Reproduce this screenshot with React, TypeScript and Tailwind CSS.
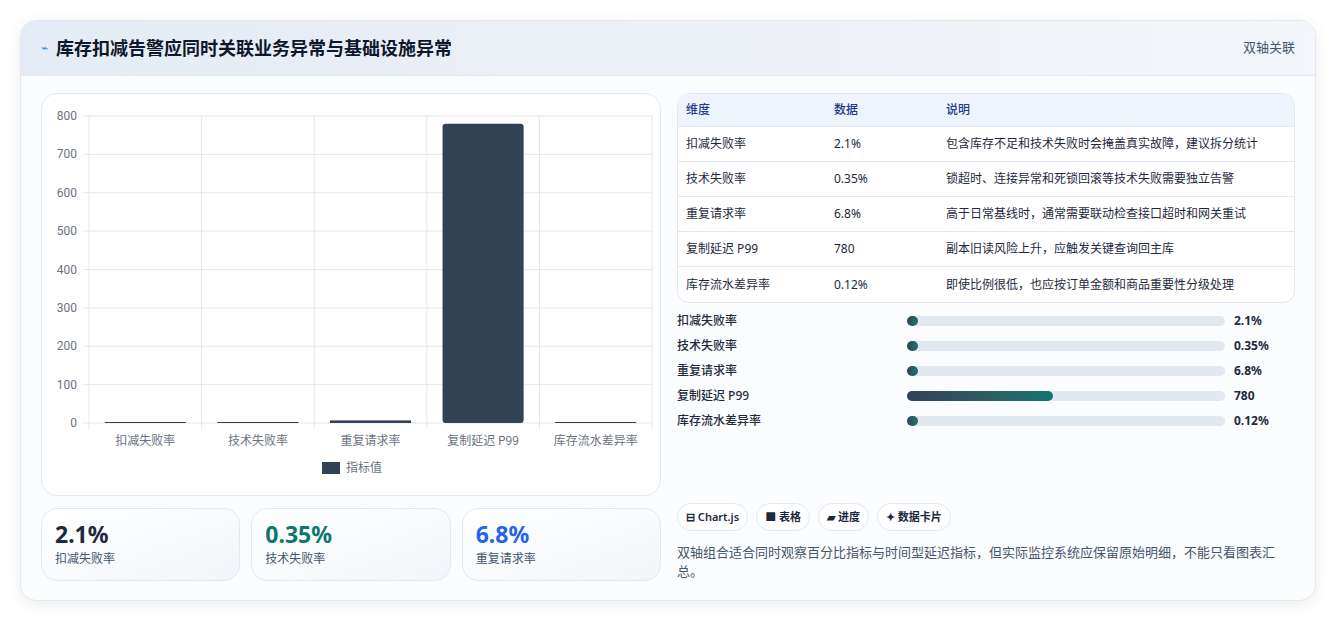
import React from "react";

const rows = [
  ["扣减失败率", "2.1%", "包含库存不足和技术失败时会掩盖真实故障，建议拆分统计", 2.1],
  ["技术失败率", "0.35%", "锁超时、连接异常和死锁回滚等技术失败需要独立告警", 0.35],
  ["重复请求率", "6.8%", "高于日常基线时，通常需要联动检查接口超时和网关重试", 6.8],
  ["复制延迟 P99", "780", "副本旧读风险上升，应触发关键查询回主库", 780],
  ["库存流水差异率", "0.12%", "即使比例很低，也应按订单金额和商品重要性分级处理", 0.12],
] as const;

function Chart() {
  const x0 = 47, y0 = 22, w = 563, h = 307;
  const cw = w / 5;
  const ticks = [0, 100, 200, 300, 400, 500, 600, 700, 800];
  return (
    <svg width="620" height="400" className="block">
      {ticks.map((t) => {
        const y = y0 + h - (t / 800) * h;
        return (
          <g key={t}>
            <line x1={x0 - 6} x2={x0 + w} y1={y} y2={y} stroke="#e5e7eb" />
            <text x={x0 - 12} y={y + 4} textAnchor="end" fontSize="12" fill="#6b7280" fontFamily="Roboto, sans-serif">{t}</text>
          </g>
        );
      })}
      {[0, 1, 2, 3, 4, 5].map((i) => (
        <line key={i} x1={x0 + i * cw} x2={x0 + i * cw} y1={y0} y2={y0 + h + 6} stroke="#e5e7eb" />
      ))}
      {rows.map((r, i) => {
        const v = r[3] as number;
        const bh = Math.max((v / 800) * h, 1);
        const bw = cw * 0.72;
        const bx = x0 + i * cw + (cw - bw) / 2;
        return (
          <g key={i}>
            <rect x={bx} y={y0 + h - bh} width={bw} height={bh} rx={v > 100 ? 3 : 0} fill="#334155" />
            <text x={x0 + i * cw + cw / 2} y={y0 + h + 22} textAnchor="middle" fontSize="12" fill="#6b7280" fontFamily="'Noto Sans CJK SC', sans-serif">{r[0]}</text>
          </g>
        );
      })}
      <rect x={280} y={368} width={18} height={12} fill="#334155" />
      <text x={304} y={378} fontSize="12" fill="#6b7280" fontFamily="'Noto Sans CJK SC', sans-serif">指标值</text>
    </svg>
  );
}

export default function App() {
  return (
    <div className="min-h-[620px] bg-white p-5" style={{ fontFamily: "'Noto Sans', 'Noto Sans CJK SC', sans-serif" }}>
      <div className="rounded-2xl border border-slate-200 bg-[#fbfcfe] shadow-[0_4px_16px_rgba(15,23,42,0.08)] overflow-hidden">
        <div className="h-[55px] flex items-center justify-between px-5 bg-gradient-to-r from-[#e5ebf4] to-[#f3f6fa] border-b border-slate-200">
          <div className="flex items-center gap-2">
            <span className="text-[#3b82f6] text-xs">⌁</span>
            <span className="text-[18px] font-bold text-[#0f172a]">库存扣减告警应同时关联业务异常与基础设施异常</span>
          </div>
          <span className="text-[13px] text-slate-600">双轴关联</span>
        </div>
        <div className="flex gap-4 px-5 pt-[17px] pb-[19px]">
          <div className="w-[620px] flex flex-col gap-3">
            <div className="h-[403px] rounded-2xl border border-slate-200 bg-white">
              <Chart />
            </div>
            <div className="grid grid-cols-3 gap-[11px]">
              {[["2.1%", "扣减失败率", "text-[#1e293b]"], ["0.35%", "技术失败率", "text-[#0f766e]"], ["6.8%", "重复请求率", "text-[#2563eb]"]].map(([v, l, c]) => (
                <div key={l} className="h-[73px] rounded-2xl border border-slate-200 bg-gradient-to-br from-white to-[#f1f5f9] px-[13px] pt-[10px]">
                  <div className={`text-[23px] font-bold leading-[30px] ${c}`}>{v}</div>
                  <div className="text-xs text-slate-600 mt-[2px]">{l}</div>
                </div>
              ))}
            </div>
          </div>
          <div className="w-[620px] flex flex-col">
            <div className="rounded-xl border border-slate-200 overflow-hidden bg-white text-xs text-[#1e293b]">
              <div className="flex h-[33px] items-center bg-[#eef4fd] border-b border-slate-200 text-[#1e3a8a] font-medium">
                <div className="w-[148px] pl-2">维度</div><div className="w-[112px] pl-[8px]">数据</div><div className="flex-1 pl-[8px]">说明</div>
              </div>
              {rows.map((r, i) => (
                <div key={i} className={`flex h-[35px] items-center ${i < 4 ? "border-b border-slate-200" : ""}`}>
                  <div className="w-[148px] pl-2">{r[0]}</div><div className="w-[112px] pl-[8px]">{r[1]}</div><div className="flex-1 pl-[8px]">{r[2]}</div>
                </div>
              ))}
            </div>
            <div className="flex flex-col mt-[10px] gap-[9px]">
              {rows.map((r, i) => {
                const v = r[3] as number;
                const pct = Math.max((v / 1700) * 100, 3.6);
                return (
                  <div key={i} className="flex items-center h-4 text-xs">
                    <div className="w-[230px] text-[#1e293b] font-medium">{r[0]}</div>
                    <div className="w-[318px] h-[10px] rounded-full bg-[#e2e8f0]">
                      <div className="h-full rounded-full bg-gradient-to-r from-[#334155] to-[#0f766e]" style={{ width: `${pct}%` }} />
                    </div>
                    <div className="ml-[9px] font-bold text-[#1e293b]">{r[1]}</div>
                  </div>
                );
              })}
            </div>
            <div className="mt-auto flex gap-2">
              {["⊟ Chart.js", "■ 表格", "▰ 进度", "✦ 数据卡片"].map((t) => (
                <span key={t} className="h-[28px] px-[8px] rounded-full border border-slate-200 bg-white text-[11px] font-semibold text-[#1e293b] flex items-center">{t}</span>
              ))}
            </div>
            <p className="mt-[12px] text-[13px] leading-[19px] text-slate-600">双轴组合适合同时观察百分比指标与时间型延迟指标，但实际监控系统应保留原始明细，不能只看图表汇总。</p>
          </div>
        </div>
      </div>
    </div>
  );
}
